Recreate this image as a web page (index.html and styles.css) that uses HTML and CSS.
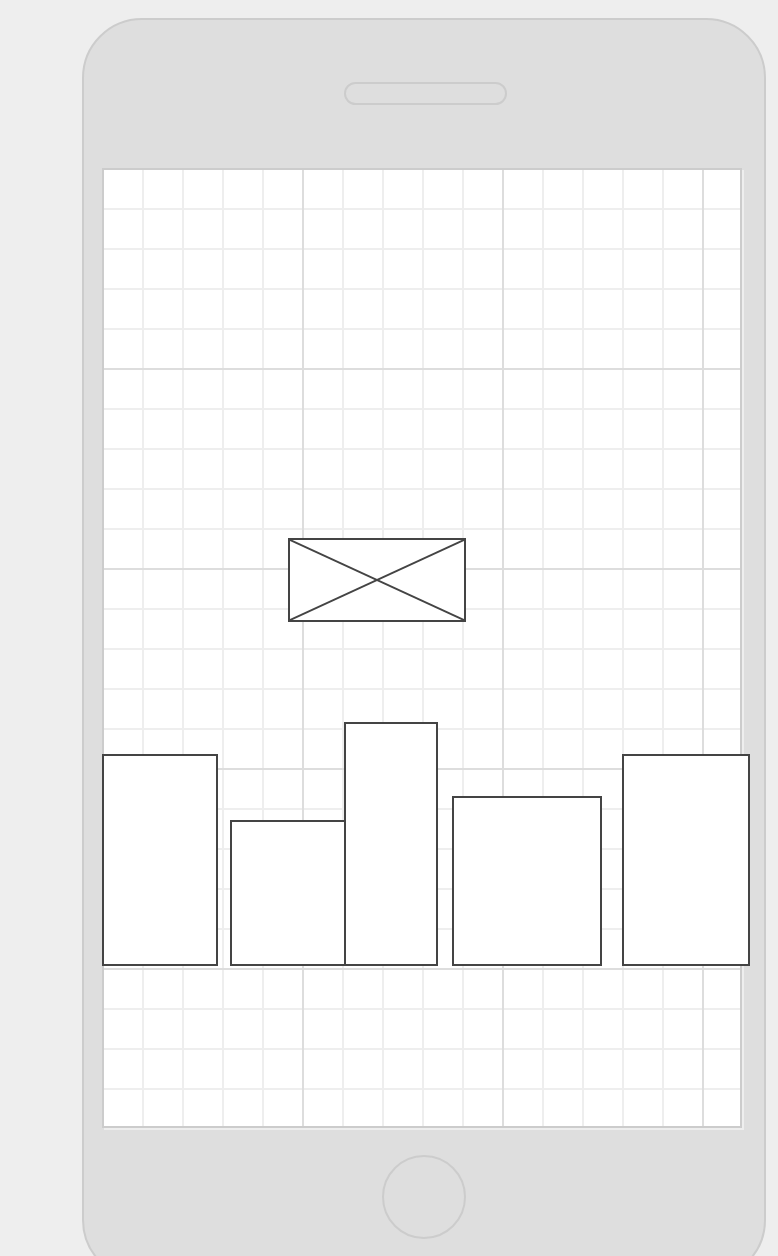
FILE: index.html
```html
<!DOCTYPE html>
<html lang="en">
<head>
    <meta charset="UTF-8">
    <meta name="viewport" content="width=device-width, initial-scale=1.0">
    <title>Phone Wireframe</title>
    <link rel="stylesheet" href="styles.css">
</head>
<body>
    <div class="phone">
        <div class="speaker"></div>

        <div class="screen">
            <div class="placeholder">
                <svg viewBox="0 0 174 80" preserveAspectRatio="none">
                    <line x1="0" y1="0" x2="174" y2="80"/>
                    <line x1="0" y1="80" x2="174" y2="0"/>
                </svg>
            </div>

            <div class="blocks">
                <div class="block b1"></div>
                <div class="block b2"></div>
                <div class="block b3"></div>
                <div class="block b4"></div>
                <div class="block b5"></div>
            </div>
        </div>

        <div class="home"></div>
    </div>
</body>
</html>
```

FILE: styles.css
```css
*{
    box-sizing: border-box;
}
body{
    margin: 0;
    background: #eee;
    height: 1256px;
    overflow: hidden;
}
.phone{
    display: flex;
    flex-direction: column;
    align-items: flex-start;
    margin: 18px 0 0 82px;
    width: 684px;
    height: 1262px;
    background: #dedede;
    border: 2px solid #ccc;
    border-radius: 60px;
}
.speaker{
    margin: 62px 0 0 260px;
    width: 163px;
    height: 23px;
    border: 2px solid #ccc;
    border-radius: 12px;
}
.screen{
    display: flex;
    flex-direction: column;
    align-items: flex-start;
    margin: 63px 0 0 18px;
    padding-top: 368px;
    width: 640px;
    height: 960px;
    border: 2px solid #ccc;
    box-shadow: 2px 2px 0 #eee;
    background-color: #fff;
    /* 40px grid, darker line every 5 cells */
    background-image:
        linear-gradient(to right, transparent 198px, #ddd 198px),
        linear-gradient(to bottom, transparent 198px, #ddd 198px),
        linear-gradient(to right, transparent 38px, #eee 38px),
        linear-gradient(to bottom, transparent 38px, #eee 38px);
    background-size: 200px 200px, 200px 200px, 40px 40px, 40px 40px;
}
.placeholder{
    margin-left: 184px;
    width: 178px;
    height: 84px;
    background: #fff;
    border: 2px solid #444;
}
.placeholder svg{
    display: block;
    width: 100%;
    height: 100%;
}
.placeholder line{
    stroke: #444;
    stroke-width: 2;
}
.blocks{
    display: flex;
    align-items: flex-end;
    margin: 100px 0 0 -2px;
}
.block{
    flex-shrink: 0;
    background: #fff;
    border: 2px solid #444;
}
.b1{
    width: 116px;
    height: 212px;
}
.b2{
    width: 116px;
    height: 146px;
    margin-left: 12px;
}
.b3{
    width: 94px;
    height: 244px;
    margin-left: -2px;
}
.b4{
    width: 150px;
    height: 170px;
    margin-left: 14px;
}
.b5{
    width: 128px;
    height: 212px;
    margin-left: 20px;
}
.home{
    margin: 27px 0 0 298px;
    width: 84px;
    height: 84px;
    border: 2px solid #ccc;
    border-radius: 50%;
}
```
